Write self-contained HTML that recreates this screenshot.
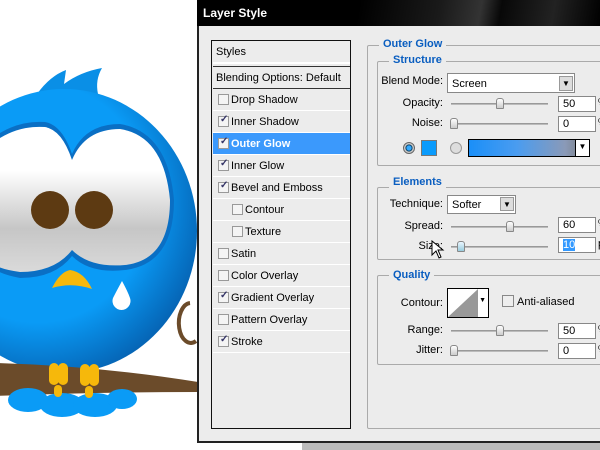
<!DOCTYPE html>
<html><head><meta charset="utf-8"><style>
*{margin:0;padding:0;box-sizing:border-box}
body{width:600px;height:450px;overflow:hidden;background:#fff;position:relative;font-family:"Liberation Sans",Tahoma,sans-serif;font-size:11px;color:#000}
.a{position:absolute}
.dlg{left:197px;top:0;width:410px;height:443px;background:#ececec;border:2px solid #222;border-top:none}
.title{left:197px;top:0;width:403px;height:26px;background:linear-gradient(100deg,#000 40%,#1a1a1a 60%,#333 70%,#080808 75%,#222 88%,#000);color:#fff;font-weight:bold;font-size:12px;padding:6px 0 0 6px}
.lp{left:211px;top:40px;width:140px;height:389px;border:1px solid #111;background:#ececec}
.row{position:absolute;left:1px;width:137px;height:22px;border-bottom:1px solid #fff;padding:5px 0 0 18px}
.cb{position:absolute;left:5px;top:5px;width:11px;height:11px;border:1px solid #999;background:#f4f4f4}
.cb.on::after{content:"✓";position:absolute;left:1px;top:-3px;font-size:10px;color:#336;font-weight:bold}
.sel{background:#3b99fc;color:#fff;font-weight:bold}
.grp{border:1px solid #aaa;border-radius:2px}
.lg{position:absolute;background:#ececec;color:#0a5ec0;font-weight:bold;padding:0 4px}
.lbl{position:absolute;text-align:right;width:70px}
.inp{position:absolute;background:#fff;border:1px solid #888;height:16px;padding:1px 4px}
.sl{position:absolute;height:2px;background:#bbb;border-top:1px solid #999}
.th{position:absolute;width:8px;height:11px;background:linear-gradient(#fff,#ccc);border:1px solid #888;border-radius:3px 3px 1px 1px;top:-6px}
.dd{position:absolute;right:1px;top:1px;width:14px;height:14px;background:#ddd;border:1px solid #999;font-size:8px;text-align:center;line-height:13px}
</style></head><body>
<svg class="a" style="left:0;top:0" width="200" height="450">
<defs>
<radialGradient id="bd" cx="0.4" cy="0.4" r="0.65"><stop offset="0.65" stop-color="#0a9bf6"/><stop offset="1" stop-color="#0562b2"/></radialGradient>
<linearGradient id="ey" x1="0" y1="0" x2="0" y2="1"><stop offset="0.3" stop-color="#ffffff"/><stop offset="0.7" stop-color="#c6c6c6"/><stop offset="1" stop-color="#dadada"/></linearGradient>
</defs>
<path d="M190 303 a12 20 0 1 0 6 38" fill="none" stroke="#6b4b2a" stroke-width="4"/>
<path d="M37 94 Q50 76 66 70 L64 84 Q80 72 102 68 Q95 80 98 94 Z" fill="#0a8fe6"/>
<ellipse cx="64" cy="231" rx="133" ry="142" fill="url(#bd)"/>
<path d="M-10 140 Q15 120 45 122 Q62 125 72 154 Q85 124 120 124 Q168 132 174 200 Q174 264 125 270 Q90 274 72 256 Q55 278 20 278 Q-10 272 -10 262 Z" fill="#0a6fc4"/>
<path d="M-10 145 Q15 125 45 127 Q62 130 72 160 Q85 129 120 129 Q164 136 170 200 Q170 260 125 265 Q90 268 72 250 Q55 272 20 272 Q-10 268 -10 258 Z" fill="url(#ey)"/>
<circle cx="50" cy="210" r="19" fill="#5d3a12"/>
<circle cx="94" cy="210" r="19" fill="#5d3a12"/>
<path d="M52 288 Q60 272 70 270 Q84 272 92 289 Q72 282 52 288Z" fill="#f6b80b"/>
<path d="M122 281 Q116 292 113 298 a9 9 0 1 0 17 0 Q128 292 122 281Z" fill="#fff"/>
<path d="M-5 363 Q100 366 198 382 L198 392 Q100 392 -5 396Z" fill="#6b4b2a"/>
<g fill="#0a9bf6"><ellipse cx="28" cy="400" rx="20" ry="12"/><ellipse cx="62" cy="405" rx="22" ry="12"/><ellipse cx="95" cy="405" rx="22" ry="12"/><ellipse cx="122" cy="399" rx="15" ry="10"/></g>
<g fill="#f6b80b"><rect x="49" y="363" width="10" height="22" rx="5"/><rect x="58" y="363" width="10" height="22" rx="5"/><rect x="80" y="364" width="10" height="22" rx="5"/><rect x="89" y="364" width="10" height="22" rx="5"/><rect x="54" y="385" width="8" height="12" rx="4"/><rect x="85" y="386" width="8" height="12" rx="4"/></g>
</svg>
<div class="a" style="left:302px;top:443px;width:298px;height:7px;background:#bbb"></div>
<div class="a dlg"></div>
<div class="a title">Layer Style</div>
<div class="a lp">
<div class="row" style="top:0;height:23px;padding-left:3px;border-bottom:2px solid #fff">Styles</div>
<div class="row" style="top:25px;height:23px;padding-left:3px;border-top:1px solid #333;border-bottom:1px solid #333">Blending Options: Default</div>
<div class="row" style="top:48px"><span class="cb"></span>Drop Shadow</div>
<div class="row" style="top:70px"><span class="cb on"></span>Inner Shadow</div>
<div class="row sel" style="top:92px"><span class="cb on"></span>Outer Glow</div>
<div class="row" style="top:114px"><span class="cb on"></span>Inner Glow</div>
<div class="row" style="top:136px"><span class="cb on"></span>Bevel and Emboss</div>
<div class="row" style="top:158px;padding-left:32px"><span class="cb" style="left:19px"></span>Contour</div>
<div class="row" style="top:180px;padding-left:32px"><span class="cb" style="left:19px"></span>Texture</div>
<div class="row" style="top:202px"><span class="cb"></span>Satin</div>
<div class="row" style="top:224px"><span class="cb"></span>Color Overlay</div>
<div class="row" style="top:246px"><span class="cb on"></span>Gradient Overlay</div>
<div class="row" style="top:268px"><span class="cb"></span>Pattern Overlay</div>
<div class="row" style="top:290px"><span class="cb on"></span>Stroke</div>
</div>
<div class="a grp" style="left:367px;top:45px;width:240px;height:384px"></div>
<div class="lg" style="left:379px;top:38px">Outer Glow</div>
<div class="a grp" style="left:377px;top:61px;width:230px;height:105px"></div>
<div class="lg" style="left:389px;top:54px">Structure</div>
<div class="lbl" style="left:373px;top:75px">Blend Mode:</div>
<div class="inp" style="left:447px;top:73px;width:128px;height:20px;padding-top:4px">Screen<span class="dd" style="top:2px;height:15px">▼</span></div>
<div class="lbl" style="left:373px;top:97px">Opacity:</div>
<div class="sl" style="left:451px;top:103px;width:97px"><span class="th" style="left:45px"></span></div>
<div class="inp" style="left:558px;top:96px;width:38px">50</div>
<div class="lbl" style="left:373px;top:117px">Noise:</div>
<div class="sl" style="left:451px;top:123px;width:97px"><span class="th" style="left:-1px"></span></div>
<div class="inp" style="left:558px;top:116px;width:38px">0</div>
<div class="a" style="left:403px;top:142px;width:12px;height:12px;border-radius:50%;background:radial-gradient(#3af 30%,#035 45%,#ccc 55%);border:1px solid #666"></div>
<div class="a" style="left:421px;top:140px;width:16px;height:16px;background:#0a9bfc;border:1px solid #777"></div>
<div class="a" style="left:450px;top:142px;width:12px;height:12px;border-radius:50%;background:#ddd;border:1px solid #999"></div>
<div class="a" style="left:468px;top:139px;width:122px;height:18px;border:1px solid #000;background:linear-gradient(90deg,#1a8ff8,#4a9cf0 40%,#8a9ab8 80%,#777)"><span class="dd" style="top:0;right:0;background:#fff;border:none;border-left:1px solid #000;height:16px">▼</span></div>
<div class="a grp" style="left:377px;top:187px;width:230px;height:73px"></div>
<div class="lg" style="left:389px;top:176px">Elements</div>
<div class="lbl" style="left:373px;top:198px">Technique:</div>
<div class="inp" style="left:447px;top:195px;width:69px;height:19px;padding-top:3px">Softer<span class="dd">▼</span></div>
<div class="lbl" style="left:373px;top:220px">Spread:</div>
<div class="sl" style="left:451px;top:226px;width:97px"><span class="th" style="left:55px"></span></div>
<div class="inp" style="left:558px;top:217px;width:38px">60</div>
<div class="lbl" style="left:373px;top:240px">Size:</div>
<div class="sl" style="left:451px;top:246px;width:97px"><span class="th" style="left:6px;background:linear-gradient(#eaf6ff,#9cd)"></span></div>
<div class="inp" style="left:558px;top:237px;width:38px"><span style="background:#3399ff;color:#fff">10</span></div>
<svg class="a" style="left:431px;top:240px" width="14" height="20"><path d="M1 1 L1 15 L5 11 L8 18 L10 17 L7 10 L12 10 Z" fill="#fff" stroke="#000"/></svg>
<div class="a grp" style="left:377px;top:275px;width:230px;height:90px"></div>
<div class="lg" style="left:389px;top:269px">Quality</div>
<div class="lbl" style="left:373px;top:297px">Contour:</div>
<div class="a" style="left:447px;top:288px;width:42px;height:30px;border:1px solid #000;background:#fff"><svg width="30" height="28" style="position:absolute;left:0;top:0"><path d="M0 28 L30 0 L30 28Z" fill="#999"/></svg><span style="position:absolute;right:2px;top:8px;font-size:7px">▼</span></div>
<div class="a" style="left:502px;top:295px;width:12px;height:12px;border:1px solid #888;background:#eee"></div>
<div class="a" style="left:517px;top:296px">Anti-aliased</div>
<div class="lbl" style="left:373px;top:324px">Range:</div>
<div class="sl" style="left:451px;top:330px;width:97px"><span class="th" style="left:45px"></span></div>
<div class="inp" style="left:558px;top:323px;width:38px">50</div>
<div class="lbl" style="left:373px;top:344px">Jitter:</div>
<div class="sl" style="left:451px;top:350px;width:97px"><span class="th" style="left:-1px"></span></div>
<div class="inp" style="left:558px;top:343px;width:38px">0</div>
<div class="a" style="left:598px;top:97px;font-size:9px">%</div>
<div class="a" style="left:598px;top:117px;font-size:9px">%</div>
<div class="a" style="left:598px;top:218px;font-size:9px">%</div>
<div class="a" style="left:598px;top:238px">p</div>
<div class="a" style="left:598px;top:324px;font-size:9px">%</div>
<div class="a" style="left:598px;top:344px;font-size:9px">%</div>
</body></html>
